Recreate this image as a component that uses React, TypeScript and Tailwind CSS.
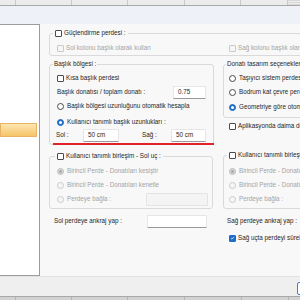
import React from "react";

type ItemProps = {
  label: string;
  checked?: boolean;
  disabled?: boolean;
};

const Check: React.FC<ItemProps> = ({ label, checked = false, disabled = false }) => (
  <span className="flex items-center gap-[2px] whitespace-nowrap">
    <span
      className={`w-[7px] h-[7px] shrink-0 rounded-[1px] border flex items-center justify-center ${
        checked
          ? "bg-[#1f6fc9] border-[#1f6fc9]"
          : disabled
          ? "bg-[#f6f6f6] border-[#cacaca]"
          : "bg-white border-[#4a4a4a]"
      }`}
    >
      {checked && (
        <svg viewBox="0 0 8 8" className="w-[6px] h-[6px]">
          <path d="M1.6 4.3 L3.2 5.8 L6.4 2.3" stroke="white" strokeWidth="1.1" fill="none" />
        </svg>
      )}
    </span>
    <span className={disabled ? "text-[#a4a4a4]" : "text-[#1e1e1e]"}>{label}</span>
  </span>
);

const Radio: React.FC<ItemProps> = ({ label, checked = false, disabled = false }) => (
  <span className="flex items-center gap-[3px] whitespace-nowrap">
    <span
      className={`w-[7px] h-[7px] shrink-0 rounded-full border flex items-center justify-center ${
        checked && !disabled
          ? "bg-[#1f6fc9] border-[#1f6fc9]"
          : checked
          ? "bg-[#d9d9d9] border-[#bdbdbd]"
          : disabled
          ? "bg-[#f6f6f6] border-[#cacaca]"
          : "bg-white border-[#4a4a4a]"
      }`}
    >
      {checked && (
        <span className={`w-[3px] h-[3px] rounded-full ${disabled ? "bg-[#a9a9a9]" : "bg-white"}`} />
      )}
    </span>
    <span className={disabled ? "text-[#a4a4a4]" : "text-[#1e1e1e]"}>{label}</span>
  </span>
);

const TextBox: React.FC<{ value?: string; className?: string; disabled?: boolean }> = ({
  value = "",
  className = "",
  disabled = false,
}) => (
  <div
    className={`h-[13px] shrink-0 rounded-[1px] border flex items-center pl-[4px] ${
      disabled
        ? "bg-[#f4f4f4] border-[#e4e4e4]"
        : "bg-white border-[#e6e6e6] border-b-[#9a9a9a]"
    } ${className}`}
  >
    {value}
  </div>
);

const App: React.FC = () => {
  return (
    <div className="w-[300px] h-[300px] overflow-hidden flex flex-col bg-[#f8f8f8] font-['Liberation_Sans',Arial,sans-serif] text-[6.3px] leading-none text-[#1e1e1e]">
      {/* grid header behind the dialog */}
      <div className="h-[6px] shrink-0 flex bg-[#ececec] border-b border-[#a9a9a9]">
        <div className="w-[16px] border-r border-[#c8c8c8]" />
        <div className="w-[56px] border-r border-[#c8c8c8]" />
        <div className="w-[56px] border-r border-[#c8c8c8]" />
        <div className="w-[57px] border-r border-[#c8c8c8]" />
        <div className="w-[56px] border-r border-[#c8c8c8]" />
        <div className="w-[47px] border-r border-[#c8c8c8]" />
        <div className="flex-1 bg-[repeating-linear-gradient(180deg,#d8d8d8_0px,#d8d8d8_1px,#eeeeee_1px,#eeeeee_2px)]" />
      </div>

      <div className="h-[18px] shrink-0 bg-[#eef1f8]" />

      {/* dialog body */}
      <div className="h-[252px] shrink-0 flex">
        <div className="w-[40px] shrink-0 bg-white border-t border-r border-b border-[#9c9c9c]">
          <div className="mt-[98px] w-[37px] h-[14px] border border-[#e6b462] bg-gradient-to-b from-[#fde6b0] to-[#f6c468]" />
        </div>

        <div className="flex-1 overflow-hidden pl-[9px] pt-[4px]">
          <div className="w-[300px] flex flex-col">
            {/* Güçlendirme perdesi */}
            <fieldset className="border border-[#dadada] rounded-[3px]">
              <legend className="ml-[3px] px-[2px]">
                <span className="h-[10px] flex items-center">
                  <Check label="Güçlendirme perdesi :" />
                </span>
              </legend>
              <div className="flex h-[10px] items-center pl-[7px] mt-[5px] mb-[2px]">
                <div className="w-[172px]">
                  <Check disabled label="Sol kolonu başlık olarak kullan" />
                </div>
                <Check disabled label="Sağ kolonu başlık olarak kullan" />
              </div>
            </fieldset>

            <div className="flex gap-[10px] mt-[3px]">
              {/* left column */}
              <div className="w-[164px] shrink-0 flex flex-col">
                <fieldset className="relative border border-[#dadada] rounded-[3px]">
                  <legend className="ml-[3px] px-[1px]">
                    <span className="h-[10px] flex items-center">Başlık bölgesi :</span>
                  </legend>
                  <div className="px-[7px] pt-[2px] pb-[3px] flex flex-col">
                    <div className="h-[14px] flex items-center">
                      <Check label="Kısa başlık perdesi" />
                    </div>
                    <div className="h-[14px] flex items-center justify-between">
                      <span>Başlık donatısı / toplam donatı :</span>
                      <TextBox value="0.75" className="w-[33px]" />
                    </div>
                    <div className="h-[14px] flex items-center">
                      <Radio label="Başlık bölgesi uzunluğunu otomatik hesapla" />
                    </div>
                    <div className="h-[14px] mt-[2px] flex items-center">
                      <Radio checked label="Kullanıcı tanımlı başlık uzunlukları :" />
                    </div>
                    <div className="h-[12px] flex items-center -ml-[1px]">
                      <span className="w-[27px]">Sol :</span>
                      <TextBox value="50 cm" className="w-[36px] h-[12px]" />
                      <span className="w-[23px]" />
                      <span className="w-[29px]">Sağ :</span>
                      <TextBox value="50 cm" className="w-[35px] h-[12px]" />
                    </div>
                  </div>
                  <div className="absolute left-[3px] right-[-1px] bottom-[-1px] h-[2px] bg-[#e2222b]" />
                </fieldset>

                <fieldset className="mt-[6px] border border-[#dadada] rounded-[3px]">
                  <legend className="ml-[5px] px-[2px]">
                    <span className="h-[10px] flex items-center">
                      <Check label="Kullanıcı tanımlı birleşim - Sol uç :" />
                    </span>
                  </legend>
                  <div className="pl-[7px] pt-[3px] pb-[2px] flex flex-col">
                    <div className="h-[14px] flex items-center">
                      <Radio checked disabled label="Birincil Perde - Donatıları kesiştir" />
                    </div>
                    <div className="h-[14px] flex items-center">
                      <Radio disabled label="Birincil Perde - Donatıları kenetle" />
                    </div>
                    <div className="h-[14px] flex items-center">
                      <Radio disabled label="Perdeye bağla :" />
                      <TextBox disabled className="ml-auto mr-[4px] w-[62px]" />
                    </div>
                  </div>
                </fieldset>

                <div className="mt-[6px] h-[13px] flex items-center pl-[5px]">
                  <span>Sol perdeye ankraj yap :</span>
                  <TextBox className="ml-auto mr-[6px] w-[60px] h-[12px]" />
                </div>
              </div>

              {/* right column */}
              <div className="w-[110px] shrink-0 flex flex-col">
                <fieldset className="border border-[#dadada] rounded-[3px]">
                  <legend className="ml-[2px] px-[1px]">
                    <span className="h-[10px] flex items-center">Donatı tasarım seçenekleri</span>
                  </legend>
                  <div className="pl-[5px] pt-[2px] pb-[3px] flex flex-col">
                    <div className="h-[14px] flex items-center">
                      <Radio label="Taşıyıcı sistem perdesi" />
                    </div>
                    <div className="h-[14px] flex items-center">
                      <Radio label="Bodrum kat çevre perdesi" />
                    </div>
                    <div className="h-[14px] mt-[1px] flex items-center">
                      <Radio checked label="Geometriye göre otomatik" />
                    </div>
                  </div>
                </fieldset>

                <div className="mt-[1px] h-[14px] flex items-center pl-[6px]">
                  <Check label="Aplikasyonda daima donatı göster" />
                </div>

                <fieldset className="mt-[17px] border border-[#dadada] rounded-[3px]">
                  <legend className="ml-[3px] px-[2px]">
                    <span className="h-[10px] flex items-center">
                      <Check label="Kullanıcı tanımlı birleşim - Sağ uç :" />
                    </span>
                  </legend>
                  <div className="pl-[5px] pt-[4px] pb-[2px] flex flex-col">
                    <div className="h-[14px] flex items-center">
                      <Radio checked disabled label="Birincil Perde - Donatıları kesiştir" />
                    </div>
                    <div className="h-[14px] flex items-center">
                      <Radio disabled label="Birincil Perde - Donatıları kenetle" />
                    </div>
                    <div className="h-[14px] flex items-center">
                      <Radio disabled label="Perdeye bağla :" />
                    </div>
                  </div>
                </fieldset>

                <div className="mt-[5px] h-[14px] flex items-center pl-[4px]">
                  <span>Sağ perdeye ankraj yap :</span>
                </div>

                <div className="mt-[3px] h-[14px] flex items-center pl-[6px]">
                  <Check checked label="Sağ uçta perdeyi sürekli kabul et" />
                </div>
              </div>
            </div>
          </div>
        </div>
      </div>

      {/* button bar */}
      <div className="h-[20px] shrink-0 bg-[#efefef] border-t border-[#e2e2e2] overflow-hidden">
        <div className="pl-[297px] pt-[5px] flex">
          <div className="w-[50px] h-[13px] shrink-0 bg-white border border-[#3a7fd2] rounded-[2px]" />
        </div>
      </div>

      {/* grid footer behind the dialog */}
      <div className="h-[4px] shrink-0 flex bg-[#d2d2d2] border-t border-[#a8a8a8]">
        <div className="w-[16px] border-r border-[#b4b4b4]" />
        <div className="w-[56px] border-r border-[#b4b4b4]" />
        <div className="w-[56px] border-r border-[#b4b4b4]" />
        <div className="w-[57px] border-r border-[#b4b4b4]" />
        <div className="w-[57px] border-r border-[#b4b4b4]" />
        <div className="w-[47px] border-r border-[#b4b4b4]" />
        <div className="flex-1" />
      </div>
    </div>
  );
};

export default App;
